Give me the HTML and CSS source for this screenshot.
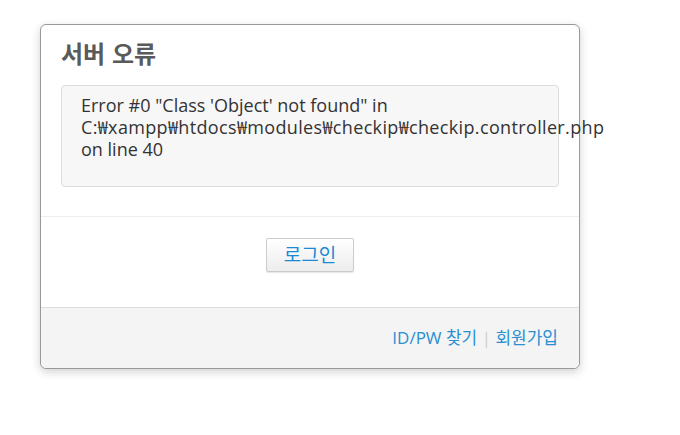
FILE: index.html
```html
<!DOCTYPE html>
<html lang="ko">
<head>
    <meta charset="UTF-8">
    <title>서버 오류</title>
    <link rel="stylesheet" href="styles.css">
</head>
<body>
    <div class="login-box">
        <div class="box-body">
            <h1 class="box-title">서버 오류</h1>
            <div class="error-msg">
                Error #0 "Class 'Object' not found" in<br>
                <span class="path">C:₩xampp₩htdocs₩modules₩checkip₩checkip.controller.php</span><br>
                on line 40
            </div>
        </div>
        <div class="box-action">
            <a class="btn" href="#">로그인</a>
        </div>
        <div class="box-footer">
            <a href="#">ID/PW 찾기</a>
            <span class="sep">|</span>
            <a href="#">회원가입</a>
        </div>
    </div>
</body>
</html>
```

FILE: styles.css
```css
body {
    margin: 0;
    padding: 24px 40px;
    background: #fff;
    font-family: "Open Sans", "Noto Sans CJK KR", sans-serif;
    color: #333;
}

.login-box {
    width: 538px;
    border: 1px solid #999;
    border-radius: 6px;
    box-shadow: 0 3px 10px rgba(0, 0, 0, 0.18);
    background: #fff;
}

.box-body {
    padding: 12px 20px 29px;
    border-bottom: 1px solid #eee;
}

.box-title {
    margin: 0 0 16px;
    font-family: "Noto Sans CJK KR", sans-serif;
    font-size: 24px;
    line-height: 32px;
    font-weight: bold;
    color: #5a5a5a;
}

.error-msg {
    background: #f7f7f7;
    border: 1px solid #ddd;
    border-radius: 4px;
    padding: 8px 19px 26px;
    font-size: 18px;
    line-height: 22px;
    color: #333;
}

/* 긴 경로는 박스 밖으로 넘침 */
.path {
    white-space: nowrap;
    letter-spacing: 0.35px;
}

.box-action {
    padding: 21px 0 35px;
    border-bottom: 1px solid #ddd;
    text-align: center;
}

.btn {
    display: inline-block;
    width: 86px;
    height: 32px;
    line-height: 32px;
    border: 1px solid #ccc;
    border-radius: 2px;
    background: linear-gradient(#fff, #ececec);
    box-shadow: 0 1px 1px rgba(0, 0, 0, 0.1);
    color: #1a8ad4;
    font-size: 19px;
    text-decoration: none;
}

.box-footer {
    background: #f4f4f4;
    border-radius: 0 0 6px 6px;
    padding: 17px 21px 17px;
    text-align: right;
    font-size: 17px;
    line-height: 26px;
}

.box-footer a {
    color: #2a8fd2;
    text-decoration: none;
}

.box-footer .sep {
    color: #ccc;
}
```
